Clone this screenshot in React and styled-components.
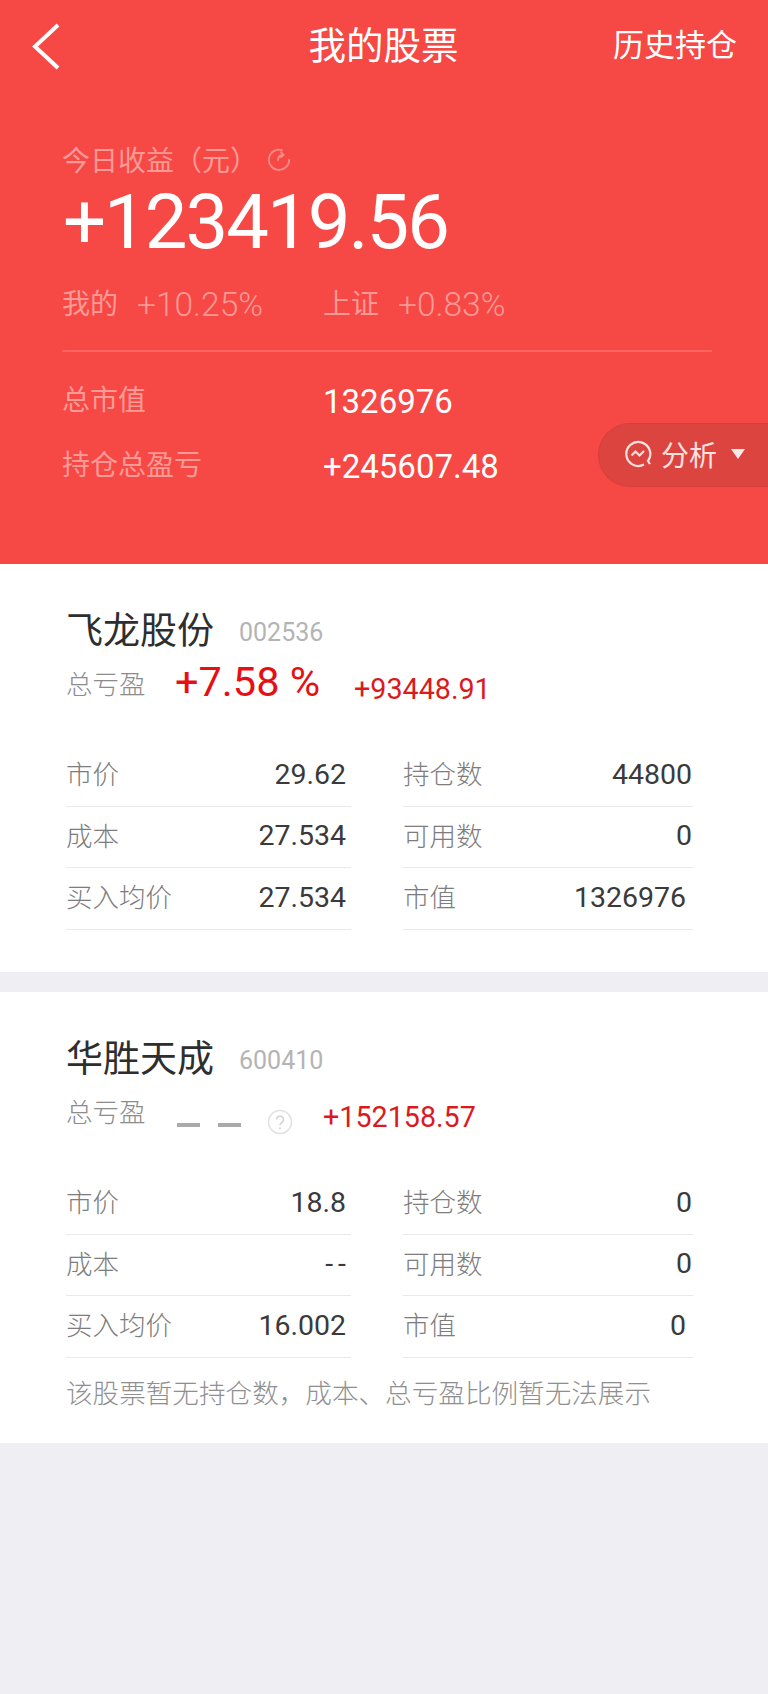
import React from "react";
import styled, { createGlobalStyle } from "styled-components";

const GlobalStyle = createGlobalStyle`
  html, body {
    margin: 0;
    padding: 0;
    background: #eeeef3;
  }
  body {
    font-family: Roboto, "Noto Sans CJK SC", sans-serif;
  }
`;

const Page = styled.div`
  width: 768px;
  height: 1694px;
  overflow: hidden;
  background: #eeeef3;
`;

const Hero = styled.header`
  position: relative;
  height: 564px;
  box-sizing: border-box;
  background: #f64845;
  color: #fff;
  padding: 0 56px 0 62px;
`;
const Nav = styled.div`
  height: 92px;
  margin: 0 -56px 0 -62px;
  padding: 0 31px 0 30px;
  display: grid;
  grid-template-columns: 1fr auto 1fr;
  align-items: center;
`;
const BackBtn = styled.svg`
  width: 32px;
  height: 48px;
`;
const NavTitle = styled.div`
  font-size: 37.5px;
  line-height: 48px;
`;
const NavLink = styled.div`
  justify-self: end;
  font-size: 31px;
  line-height: 48px;
`;
const TodayLabel = styled.div`
  margin-top: 47px;
  height: 40px;
  display: flex;
  align-items: center;
  gap: 9px;
  font-size: 28px;
  color: #fc9a96;
`;
const BigNumber = styled.div`
  margin: 1px 0 0 1px;
  font-size: 76px;
  line-height: 84px;
  letter-spacing: -2px;
`;
const CompareRow = styled.div`
  margin-top: 21px;
  display: grid;
  grid-template-columns: 261px 1fr;
  font-size: 28px;
  line-height: 40px;
  color: #fc9a96;
`;
const CompareItem = styled.div`
  display: flex;
  align-items: center;
  gap: 19px;
`;
const CompareValue = styled.span`
  font-size: 33.5px;
  font-weight: 300;
`;
const HeroLine = styled.div`
  height: 2px;
  margin-top: 25px;
  background: #fd6460;
`;
const HeroStats = styled.div`
  margin-top: 28px;
  display: grid;
  grid-template-columns: 261px 1fr;
  grid-auto-rows: 65px;
  align-items: start;
`;
const HeroLabel = styled.div`
  font-size: 28px;
  line-height: 40px;
  margin-top: 1px;
  color: #fc9a96;
`;
const HeroValue = styled.div`
  font-size: 33px;
  line-height: 44px;
`;
const AnalysisPill = styled.div`
  position: absolute;
  right: 0;
  top: 423px;
  width: 170px;
  height: 64px;
  box-sizing: border-box;
  padding: 0 0 3px 25px;
  border-radius: 32px 0 0 32px;
  background: #dc4440;
  border: 1px solid #d73f3b;
  border-right: 0;
  display: flex;
  align-items: center;
  gap: 9px;
  font-size: 28px;
  color: #ffe3e1;
`;
const Caret = styled.span`
  width: 0;
  height: 0;
  margin-left: 5px;
  border-left: 7px solid transparent;
  border-right: 7px solid transparent;
  border-top: 10px solid #ffe9e7;
`;

const Card = styled.section`
  background: #fff;
  padding: 43px 67px 0 66px;
  box-sizing: border-box;
  height: ${(props) => props.$height}px;
  margin-bottom: 20px;
`;
const NameRow = styled.div`
  display: flex;
  align-items: center;
  gap: 25px;
  height: 50px;
`;
const StockName = styled.div`
  font-size: 37px;
  line-height: 50px;
  color: #2e2e2e;
`;
const StockCode = styled.div`
  font-size: 25px;
  color: #b4b4b4;
`;
const PnlRow = styled.div`
  display: flex;
  align-items: center;
  height: 52px;
  margin-top: -2px;
`;
const PnlLabel = styled.div`
  width: 109px;
  font-size: 26.5px;
  color: #8c8c8c;
  font-weight: 300;
  position: relative;
  top: 1px;
`;
const PnlPercent = styled.div`
  width: 179px;
  font-size: 41.5px;
  color: #e60f14;
`;
const PnlAmount = styled.div`
  font-size: 28.7px;
  color: #db1a20;
  position: relative;
  top: 8px;
`;
const Dashes = styled.div`
  width: 90px;
  margin-left: 2px;
  display: flex;
  gap: 18px;
  span {
    width: 23px;
    height: 4px;
    background: #aaa;
    margin-top: 32px;
  }
`;
const Help = styled.svg`
  width: 26px;
  height: 26px;
  margin-right: 30px;
  position: relative;
  top: 13px;
`;
const Grid = styled.div`
  margin-top: 38px;
  display: grid;
  grid-template-columns: 285px 290px;
  column-gap: 52px;
`;
const Cell = styled.div`
  height: 61.5px;
  box-sizing: border-box;
  border-bottom: 1px solid #e9e9e9;
  padding: 0 ${(props) => props.$inset}px 2px 0;
  display: flex;
  align-items: center;
  justify-content: space-between;
`;
const CellLabel = styled.div`
  font-size: 26.5px;
  line-height: 36px;
  margin-top: 2px;
  color: #7d7d7d;
  font-weight: 300;
`;
const CellValue = styled.div`
  font-size: 28.5px;
  line-height: 36px;
  margin-top: 1px;
  color: #3a3a3a;
  ${(props) => props.$wide && "letter-spacing: 5px; margin-right: -5px;"}
`;
const Note = styled.div`
  margin-top: 18px;
  font-size: 26.6px;
  line-height: 36px;
  color: #8f8f8f;
  font-weight: 300;
`;

const stocks = [
  {
    name: "飞龙股份",
    code: "002536",
    amount: "+93448.91",
    percent: "+7.58 %",
    height: 408,
    cells: [
      ["市价", "29.62", 5],
      ["持仓数", "44800", 1],
      ["成本", "27.534", 5],
      ["可用数", "0", 1],
      ["买入均价", "27.534", 5],
      ["市值", "1326976", 7],
    ],
  },
  {
    name: "华胜天成",
    code: "600410",
    amount: "+152158.57",
    height: 451,
    note: "该股票暂无持仓数，成本、总亏盈比例暂无法展示",
    cells: [
      ["市价", "18.8", 5],
      ["持仓数", "0", 1],
      ["成本", "--", 5],
      ["可用数", "0", 1],
      ["买入均价", "16.002", 5],
      ["市值", "0", 7],
    ],
  },
];

const StockCard = ({ stock }) => (
  <Card $height={stock.height}>
    <NameRow>
      <StockName>{stock.name}</StockName>
      <StockCode>{stock.code}</StockCode>
    </NameRow>
    <PnlRow>
      <PnlLabel>总亏盈</PnlLabel>
      {stock.percent ? (
        <PnlPercent>{stock.percent}</PnlPercent>
      ) : (
        <>
          <Dashes>
            <span />
            <span />
          </Dashes>
          <Help viewBox="0 0 26 26">
            <circle cx="13" cy="13" r="11.5" fill="none" stroke="#e2e2e2" strokeWidth="1.6" />
            <path d="M9.5 10.5a3.5 3.5 0 1 1 5.4 3c-1.3.9-1.9 1.4-1.9 2.8" fill="none" stroke="#d4d4d4" strokeWidth="1.6" />
            <circle cx="13" cy="19.3" r="1" fill="#d4d4d4" />
          </Help>
        </>
      )}
      <PnlAmount>{stock.amount}</PnlAmount>
    </PnlRow>
    <Grid>
      {stock.cells.map(([label, value, inset]) => (
        <Cell key={label} $inset={inset}>
          <CellLabel>{label}</CellLabel>
          <CellValue $wide={value === "--"}>{value}</CellValue>
        </Cell>
      ))}
    </Grid>
    {stock.note && <Note>{stock.note}</Note>}
  </Card>
);

export default function App() {
  return (
    <Page>
      <GlobalStyle />
      <Hero>
        <Nav>
          <BackBtn viewBox="0 0 32 48">
            <path d="M28 3 5 24.500 28 46" fill="none" stroke="#fff" strokeWidth="4" />
          </BackBtn>
          <NavTitle>我的股票</NavTitle>
          <NavLink>历史持仓</NavLink>
        </Nav>
        <TodayLabel>
          今日收益（元）
          <svg width="24" height="24" viewBox="0 0 26 26">
            <path d="M17 3.600A11 11 0 1 0 24 13" fill="none" stroke="#fb8985" strokeWidth="2" />
            <path d="M12 15c0-4 1.500-6.500 5-6.500M14.500 5l3.500 3.500-3.500 3" fill="none" stroke="#fb8985" strokeWidth="2" />
          </svg>
        </TodayLabel>
        <BigNumber>+123419.56</BigNumber>
        <CompareRow>
          <CompareItem>
            <span>我的</span>
            <CompareValue>+10.25%</CompareValue>
          </CompareItem>
          <CompareItem>
            <span>上证</span>
            <CompareValue>+0.83%</CompareValue>
          </CompareItem>
        </CompareRow>
        <HeroLine />
        <HeroStats>
          <HeroLabel>总市值</HeroLabel>
          <HeroValue>1326976</HeroValue>
          <HeroLabel>持仓总盈亏</HeroLabel>
          <HeroValue>+245607.48</HeroValue>
        </HeroStats>
        <AnalysisPill>
          <svg width="28" height="28" viewBox="0 0 28 28">
            <path d="M20 24.500A12 12 0 1 1 24 21l2 3" fill="none" stroke="#ffe3e1" strokeWidth="2.200" />
            <path d="M7.500 15.500l4-4 4 4 4.500-4.500" fill="none" stroke="#ffe3e1" strokeWidth="2.200" />
          </svg>
          分析
          <Caret />
        </AnalysisPill>
      </Hero>
      {stocks.map((stock) => (
        <StockCard key={stock.code} stock={stock} />
      ))}
    </Page>
  );
}
